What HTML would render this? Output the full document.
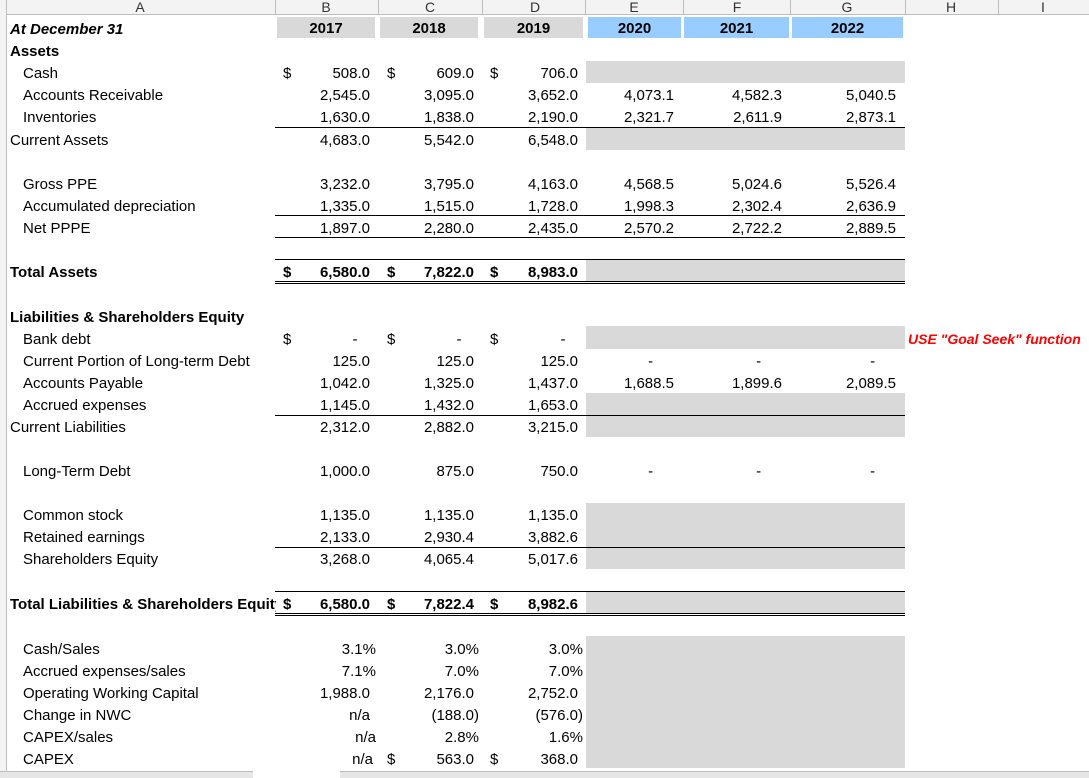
<!DOCTYPE html>
<html><head><meta charset="utf-8"><style>
body{margin:0;width:1089px;height:777px;overflow:hidden;background:#fff;font-family:"Liberation Sans",sans-serif;font-size:15px;color:#000;position:relative}
.r{position:absolute;height:22px;line-height:25px;white-space:nowrap}
.v{width:100px;text-align:right}
.b{left:270px}.c{left:374px}.d{left:478px}.e{left:574px}.f{left:682px}.g{left:796px}
.bp{left:276px}.cp{left:379px}.dp{left:483px}
.sb{left:283px}.sc{left:387px}.sd{left:490px}
.l{left:10px}.i{left:23px}
.bo{font-weight:bold}
.gr{position:absolute;background:#d9d9d9;left:586px;width:319px}
.ln{position:absolute;height:1px;background:#000;left:275px;width:630px}
.hd{position:absolute;top:0;height:14px;line-height:14px;font-size:14px;color:#333;text-align:center}
.yr{position:absolute;top:17px;height:21px;line-height:23px;font-weight:bold;text-align:center}
</style></head><body>
<div style="position:absolute;left:0;top:0;width:1089px;height:14px;background:#f3f3f3;border-bottom:1px solid #bdbdbd"></div>
<div style="position:absolute;left:0;top:0;width:6px;height:777px;background:#f3f3f3;border-right:1px solid #bdbdbd"></div>
<div class="hd" style="left:100px;width:80px">A</div>
<div class="hd" style="left:286px;width:80px">B</div>
<div class="hd" style="left:390px;width:80px">C</div>
<div class="hd" style="left:495px;width:80px">D</div>
<div class="hd" style="left:594px;width:80px">E</div>
<div class="hd" style="left:697px;width:80px">F</div>
<div class="hd" style="left:807px;width:80px">G</div>
<div class="hd" style="left:911px;width:80px">H</div>
<div class="hd" style="left:1003px;width:80px">I</div>
<div style="position:absolute;top:0;height:14px;left:275px;width:1px;background:#bdbdbd"></div>
<div style="position:absolute;top:0;height:14px;left:378px;width:1px;background:#bdbdbd"></div>
<div style="position:absolute;top:0;height:14px;left:482px;width:1px;background:#bdbdbd"></div>
<div style="position:absolute;top:0;height:14px;left:585px;width:1px;background:#bdbdbd"></div>
<div style="position:absolute;top:0;height:14px;left:683px;width:1px;background:#bdbdbd"></div>
<div style="position:absolute;top:0;height:14px;left:790px;width:1px;background:#bdbdbd"></div>
<div style="position:absolute;top:0;height:14px;left:905px;width:1px;background:#bdbdbd"></div>
<div style="position:absolute;top:0;height:14px;left:998px;width:1px;background:#bdbdbd"></div>

<div class="yr" style="left:277px;width:98px;background:#d9d9d9">2017</div>
<div class="yr" style="left:380px;width:98px;background:#d9d9d9">2018</div>
<div class="yr" style="left:484px;width:99px;background:#d9d9d9">2019</div>
<div class="yr" style="left:588px;width:93px;background:#99ccff">2020</div>
<div class="yr" style="left:684px;width:105px;background:#99ccff">2021</div>
<div class="yr" style="left:792px;width:111px;background:#99ccff">2022</div>

<div class="gr" style="top:61px;height:22px"></div>
<div class="gr" style="top:128px;height:22px"></div>
<div class="gr" style="top:260px;height:22px"></div>
<div class="gr" style="top:326px;height:23px"></div>
<div class="gr" style="top:393px;height:44px"></div>
<div class="gr" style="top:503px;height:66px"></div>
<div class="gr" style="top:592px;height:22px"></div>
<div class="gr" style="top:636px;height:132px"></div>

<div class="ln" style="top:127px"></div>
<div class="ln" style="top:215px"></div>
<div class="ln" style="top:237px"></div>
<div class="ln" style="top:259px"></div>
<div class="ln" style="top:281px"></div><div class="ln" style="top:283px"></div>
<div class="ln" style="top:415px"></div>
<div class="ln" style="top:547px"></div>
<div class="ln" style="top:591px"></div>
<div class="ln" style="top:613px"></div><div class="ln" style="top:615px"></div>

<div class="r l bo" style="top:17px;font-style:italic">At December 31</div>
<div class="r l bo" style="top:39px">Assets</div>
<div class="r i" style="top:61px">Cash</div>
<div class="r sb" style="top:61px">$</div><div class="r v b" style="top:61px">508.0</div>
<div class="r sc" style="top:61px">$</div><div class="r v c" style="top:61px">609.0</div>
<div class="r sd" style="top:61px">$</div><div class="r v d" style="top:61px">706.0</div>
<div class="r i" style="top:83px">Accounts Receivable</div>
<div class="r v b" style="top:83px">2,545.0</div><div class="r v c" style="top:83px">3,095.0</div><div class="r v d" style="top:83px">3,652.0</div>
<div class="r v e" style="top:83px">4,073.1</div><div class="r v f" style="top:83px">4,582.3</div><div class="r v g" style="top:83px">5,040.5</div>
<div class="r i" style="top:105px">Inventories</div>
<div class="r v b" style="top:105px">1,630.0</div><div class="r v c" style="top:105px">1,838.0</div><div class="r v d" style="top:105px">2,190.0</div>
<div class="r v e" style="top:105px">2,321.7</div><div class="r v f" style="top:105px">2,611.9</div><div class="r v g" style="top:105px">2,873.1</div>
<div class="r l" style="top:128px">Current Assets</div>
<div class="r v b" style="top:128px">4,683.0</div><div class="r v c" style="top:128px">5,542.0</div><div class="r v d" style="top:128px">6,548.0</div>

<div class="r i" style="top:172px">Gross PPE</div>
<div class="r v b" style="top:172px">3,232.0</div><div class="r v c" style="top:172px">3,795.0</div><div class="r v d" style="top:172px">4,163.0</div>
<div class="r v e" style="top:172px">4,568.5</div><div class="r v f" style="top:172px">5,024.6</div><div class="r v g" style="top:172px">5,526.4</div>
<div class="r i" style="top:194px">Accumulated depreciation</div>
<div class="r v b" style="top:194px">1,335.0</div><div class="r v c" style="top:194px">1,515.0</div><div class="r v d" style="top:194px">1,728.0</div>
<div class="r v e" style="top:194px">1,998.3</div><div class="r v f" style="top:194px">2,302.4</div><div class="r v g" style="top:194px">2,636.9</div>
<div class="r i" style="top:216px">Net PPPE</div>
<div class="r v b" style="top:216px">1,897.0</div><div class="r v c" style="top:216px">2,280.0</div><div class="r v d" style="top:216px">2,435.0</div>
<div class="r v e" style="top:216px">2,570.2</div><div class="r v f" style="top:216px">2,722.2</div><div class="r v g" style="top:216px">2,889.5</div>

<div class="r l bo" style="top:260px">Total Assets</div>
<div class="r sb bo" style="top:260px">$</div><div class="r v b bo" style="top:260px">6,580.0</div>
<div class="r sc bo" style="top:260px">$</div><div class="r v c bo" style="top:260px">7,822.0</div>
<div class="r sd bo" style="top:260px">$</div><div class="r v d bo" style="top:260px">8,983.0</div>

<div class="r l bo" style="top:305px">Liabilities &amp; Shareholders Equity</div>
<div class="r i" style="top:327px">Bank debt</div>
<div class="r sb" style="top:327px">$</div><div class="r v b" style="top:327px">-&nbsp;&nbsp;&nbsp;</div>
<div class="r sc" style="top:327px">$</div><div class="r v c" style="top:327px">-&nbsp;&nbsp;&nbsp;</div>
<div class="r sd" style="top:327px">$</div><div class="r v d" style="top:327px">-&nbsp;&nbsp;&nbsp;</div>
<div class="r" style="top:327px;left:908px;color:#f00;font-weight:bold;font-style:italic;font-size:14px">USE "Goal Seek" function</div>
<div class="r i" style="top:349px">Current Portion of Long-term Debt</div>
<div class="r v b" style="top:349px">125.0</div><div class="r v c" style="top:349px">125.0</div><div class="r v d" style="top:349px">125.0</div>
<div class="r v e" style="top:349px">-&nbsp;&nbsp;&nbsp;&nbsp;&nbsp;</div><div class="r v f" style="top:349px">-&nbsp;&nbsp;&nbsp;&nbsp;&nbsp;</div><div class="r v g" style="top:349px">-&nbsp;&nbsp;&nbsp;&nbsp;&nbsp;</div>
<div class="r i" style="top:371px">Accounts Payable</div>
<div class="r v b" style="top:371px">1,042.0</div><div class="r v c" style="top:371px">1,325.0</div><div class="r v d" style="top:371px">1,437.0</div>
<div class="r v e" style="top:371px">1,688.5</div><div class="r v f" style="top:371px">1,899.6</div><div class="r v g" style="top:371px">2,089.5</div>
<div class="r i" style="top:393px">Accrued expenses</div>
<div class="r v b" style="top:393px">1,145.0</div><div class="r v c" style="top:393px">1,432.0</div><div class="r v d" style="top:393px">1,653.0</div>
<div class="r l" style="top:415px">Current Liabilities</div>
<div class="r v b" style="top:415px">2,312.0</div><div class="r v c" style="top:415px">2,882.0</div><div class="r v d" style="top:415px">3,215.0</div>

<div class="r i" style="top:459px">Long-Term Debt</div>
<div class="r v b" style="top:459px">1,000.0</div><div class="r v c" style="top:459px">875.0</div><div class="r v d" style="top:459px">750.0</div>
<div class="r v e" style="top:459px">-&nbsp;&nbsp;&nbsp;&nbsp;&nbsp;</div><div class="r v f" style="top:459px">-&nbsp;&nbsp;&nbsp;&nbsp;&nbsp;</div><div class="r v g" style="top:459px">-&nbsp;&nbsp;&nbsp;&nbsp;&nbsp;</div>

<div class="r i" style="top:503px">Common stock</div>
<div class="r v b" style="top:503px">1,135.0</div><div class="r v c" style="top:503px">1,135.0</div><div class="r v d" style="top:503px">1,135.0</div>
<div class="r i" style="top:525px">Retained earnings</div>
<div class="r v b" style="top:525px">2,133.0</div><div class="r v c" style="top:525px">2,930.4</div><div class="r v d" style="top:525px">3,882.6</div>
<div class="r i" style="top:547px">Shareholders Equity</div>
<div class="r v b" style="top:547px">3,268.0</div><div class="r v c" style="top:547px">4,065.4</div><div class="r v d" style="top:547px">5,017.6</div>

<div class="r l bo" style="top:592px;width:266px;overflow:hidden">Total Liabilities &amp; Shareholders Equity</div>
<div class="r sb bo" style="top:592px">$</div><div class="r v b bo" style="top:592px">6,580.0</div>
<div class="r sc bo" style="top:592px">$</div><div class="r v c bo" style="top:592px">7,822.4</div>
<div class="r sd bo" style="top:592px">$</div><div class="r v d bo" style="top:592px">8,982.6</div>

<div class="r i" style="top:637px">Cash/Sales</div>
<div class="r v bp" style="top:637px">3.1%</div><div class="r v cp" style="top:637px">3.0%</div><div class="r v dp" style="top:637px">3.0%</div>
<div class="r i" style="top:659px">Accrued expenses/sales</div>
<div class="r v bp" style="top:659px">7.1%</div><div class="r v cp" style="top:659px">7.0%</div><div class="r v dp" style="top:659px">7.0%</div>
<div class="r i" style="top:681px">Operating Working Capital</div>
<div class="r v b" style="top:681px">1,988.0</div><div class="r v c" style="top:681px">2,176.0</div><div class="r v d" style="top:681px">2,752.0</div>
<div class="r i" style="top:703px">Change in NWC</div>
<div class="r v b" style="top:703px">n/a</div><div class="r v c" style="top:703px;left:379px">(188.0)</div><div class="r v d" style="top:703px;left:483px">(576.0)</div>
<div class="r i" style="top:725px">CAPEX/sales</div>
<div class="r v bp" style="top:725px">n/a</div><div class="r v cp" style="top:725px">2.8%</div><div class="r v dp" style="top:725px">1.6%</div>
<div class="r i" style="top:747px">CAPEX</div>
<div class="r v b" style="top:747px;left:273px">n/a</div>
<div class="r sc" style="top:747px">$</div><div class="r v c" style="top:747px">563.0</div>
<div class="r sd" style="top:747px">$</div><div class="r v d" style="top:747px">368.0</div>

<div style="position:absolute;left:0;top:771px;width:253px;height:6px;background:#e6e6e6;border-top:1px solid #bdbdbd"></div>
<div style="position:absolute;left:340px;top:771px;width:749px;height:6px;background:#e6e6e6;border-top:1px solid #bdbdbd"></div>
</body></html>
